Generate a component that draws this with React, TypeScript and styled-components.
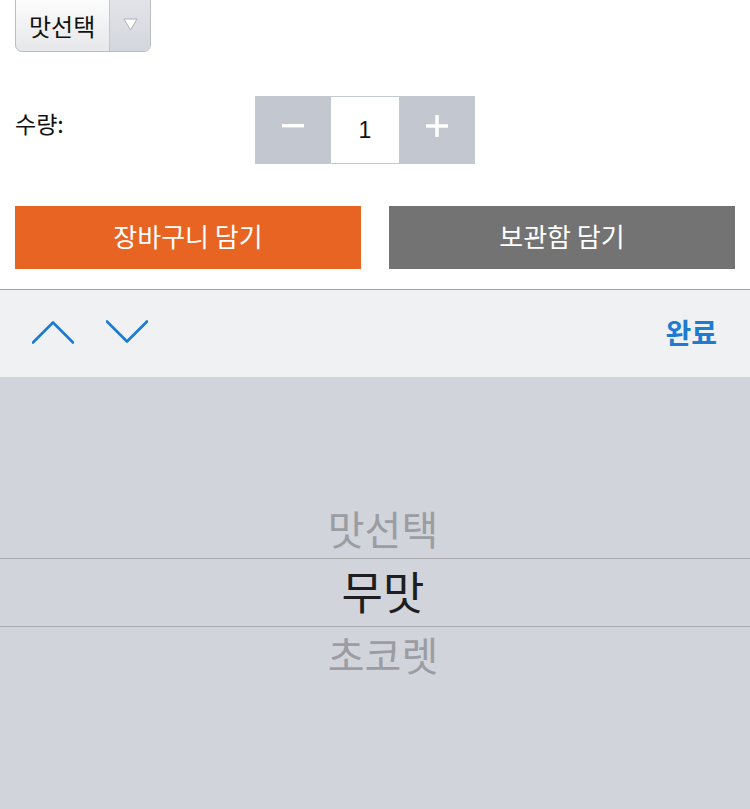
import styled, { createGlobalStyle } from "styled-components";

const GlobalStyle = createGlobalStyle`
  html, body {
    margin: 0;
    padding: 0;
    background: #fff;
  }
  body {
    font-family: "Noto Sans CJK KR", "Noto Sans", sans-serif;
    overflow: hidden;
  }
`;

const Page = styled.div`
  width: 750px;
  height: 809px;
  display: flex;
  flex-direction: column;
  overflow: hidden;
`;

const Form = styled.div`
  padding: 0 15px;
  display: flex;
  flex-direction: column;
`;

const SelectBox = styled.div`
  margin-top: -8px;
  width: 136px;
  height: 60px;
  box-sizing: border-box;
  display: flex;
  border: 1px solid #b9bcc2;
  border-radius: 7px;
  overflow: hidden;
  background: linear-gradient(#ffffff, #e6e7ea);
`;

const SelectLabel = styled.div`
  flex: 1;
  display: flex;
  align-items: center;
  padding: 7px 0 0 13px;
  font-size: 24px;
  color: #111;
`;

const SelectArrow = styled.div`
  width: 41px;
  border-left: 1px solid #c3c6cc;
  background: linear-gradient(#e4e6ea, #d3d6dc);
  display: flex;
  align-items: center;
  justify-content: center;
  padding-top: 4px;
  box-sizing: border-box;
`;

const QuantityRow = styled.div`
  margin-top: 44px;
  display: flex;
  align-items: flex-start;
`;

const QuantityLabel = styled.div`
  width: 240px;
  padding-top: 10px;
  font-size: 23px;
  color: #111;
`;

const Stepper = styled.div`
  display: flex;
  height: 68px;
  background: #c3c8d0;
`;

const StepButton = styled.div`
  width: 76px;
  display: flex;
  align-items: center;
  justify-content: center;
  color: #fff;
  padding-bottom: 8px;
  box-sizing: border-box;
`;

const StepValue = styled.div`
  width: 68px;
  margin: 1px 0;
  background: #fff;
  display: flex;
  align-items: center;
  justify-content: center;
  font-family: "Liberation Sans", Arial, sans-serif;
  font-size: 23px;
  color: #111;
`;

const ButtonRow = styled.div`
  margin-top: 42px;
  display: flex;
  gap: 28px;
  height: 63px;
`;

const ActionButton = styled.div<{ $color: string }>`
  flex: 1;
  background: ${(p) => p.$color};
  color: #fff;
  font-size: 26px;
  display: flex;
  align-items: center;
  justify-content: center;
  padding-bottom: 4px;
  box-sizing: border-box;
`;

const Keyboard = styled.div`
  margin-top: 20px;
  flex: 1;
  display: flex;
  flex-direction: column;
  border-top: 1px solid #a2a4a8;
`;

const Toolbar = styled.div`
  height: 87px;
  background: #f0f1f3;
  display: flex;
  align-items: center;
  padding: 0 33px 0 32px;
  box-sizing: border-box;
`;

const Arrows = styled.div`
  display: flex;
  gap: 32px;
  flex: 1;
  padding-bottom: 4px;
`;

const Done = styled.div`
  font-size: 28px;
  font-weight: 700;
  color: #1e7bd0;
  padding-bottom: 4px;
`;

const Picker = styled.div`
  flex: 1;
  background: #d1d4db;
  padding-top: 125px;
  display: flex;
  flex-direction: column;
`;

const PickerItem = styled.div<{ $h: number }>`
  height: ${(p) => p.$h}px;
  box-sizing: border-box;
  display: flex;
  align-items: center;
  justify-content: center;
  padding: 0 0 4px 16px;
  font-size: 40px;
  color: #9b9da2;
`;

const PickerSelected = styled.div`
  height: 69px;
  box-sizing: border-box;
  border-top: 1px solid #a8aaaf;
  border-bottom: 1px solid #a8aaaf;
  display: flex;
  align-items: center;
  justify-content: center;
  padding: 0 0 5px 16px;
  font-size: 45px;
  color: #1e1e20;
`;

const Chevron = ({ up }: { up?: boolean }) => (
  <svg width="42" height="24" viewBox="0 0 42 24">
    <polyline
      points={up ? "1,22.5 21,2.5 41,22.5" : "1,1.5 21,21.5 41,1.5"}
      fill="none"
      stroke="#1c79d4"
      strokeWidth="2.6"
      strokeLinecap="round"
      strokeLinejoin="round"
    />
  </svg>
);

export default function App() {
  return (
    <>
      <GlobalStyle />
      <Page>
        <Form>
          <SelectBox>
            <SelectLabel>맛선택</SelectLabel>
            <SelectArrow>
              <svg width="15" height="13" viewBox="0 0 15 13">
                <polygon points="1,1 14,1 7.5,12" fill="#fff" stroke="#aeb2b9" strokeWidth="1" />
              </svg>
            </SelectArrow>
          </SelectBox>

          <QuantityRow>
            <QuantityLabel>수량:</QuantityLabel>
            <Stepper>
              <StepButton>
                <svg width="22" height="4" viewBox="0 0 22 4">
                  <rect width="22" height="3.4" fill="#fff" />
                </svg>
              </StepButton>
              <StepValue>1</StepValue>
              <StepButton>
                <svg width="22" height="22" viewBox="0 0 22 22">
                  <rect x="0" y="9.3" width="22" height="3.4" fill="#fff" />
                  <rect x="9.3" y="0" width="3.4" height="22" fill="#fff" />
                </svg>
              </StepButton>
            </Stepper>
          </QuantityRow>

          <ButtonRow>
            <ActionButton $color="#e86423">장바구니 담기</ActionButton>
            <ActionButton $color="#737373">보관함 담기</ActionButton>
          </ButtonRow>
        </Form>

        <Keyboard>
          <Toolbar>
            <Arrows>
              <Chevron up />
              <Chevron />
            </Arrows>
            <Done>완료</Done>
          </Toolbar>
          <Picker>
            <PickerItem $h={56}>맛선택</PickerItem>
            <PickerSelected>무맛</PickerSelected>
            <PickerItem $h={58}>초코렛</PickerItem>
          </Picker>
        </Keyboard>
      </Page>
    </>
  );
}
